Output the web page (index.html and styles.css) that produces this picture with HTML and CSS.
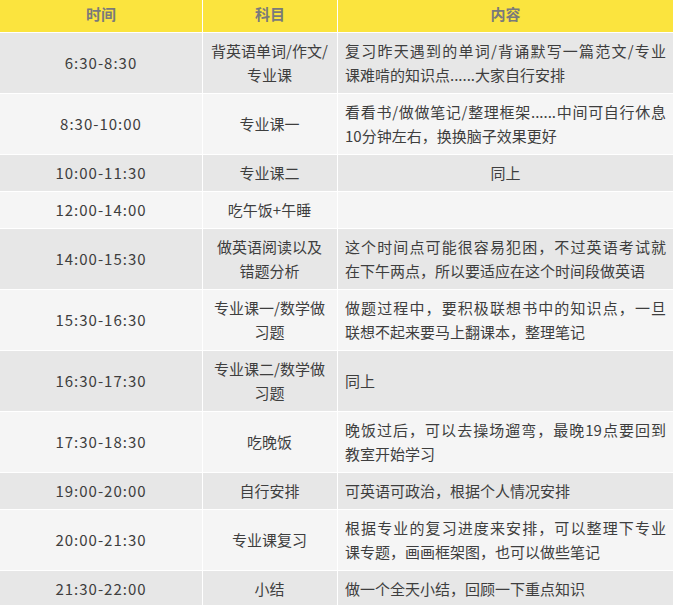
FILE: index.html
```html
<!DOCTYPE html>
<html lang="zh-CN">
<head>
<meta charset="utf-8">
<title>每日学习计划</title>
<link rel="stylesheet" href="styles.css">
</head>
<body>
<table class="plan">
  <colgroup>
    <col class="col-time">
    <col class="col-subject">
    <col class="col-content">
  </colgroup>
  <thead>
    <tr>
      <th>时间</th>
      <th>科目</th>
      <th class="last">内容</th>
    </tr>
  </thead>
  <tbody>
    <tr class="dark">
      <td class="time">6:30-8:30</td>
      <td class="subj">背英语单词/作文/专业课</td>
      <td class="cont"><span class="jl">复习昨天遇到的单词/背诵默写一篇范文/专业</span>课难啃的知识点......大家自行安排</td>
    </tr>
    <tr class="light">
      <td class="time">8:30-10:00</td>
      <td class="subj">专业课一</td>
      <td class="cont"><span class="jl">看看书/做做笔记/整理框架......中间可自行休息</span>10分钟左右，换换脑子效果更好</td>
    </tr>
    <tr class="dark">
      <td class="time">10:00-11:30</td>
      <td class="subj">专业课二</td>
      <td class="cont center">同上</td>
    </tr>
    <tr class="light">
      <td class="time">12:00-14:00</td>
      <td class="subj">吃午饭+午睡</td>
      <td class="cont"></td>
    </tr>
    <tr class="dark">
      <td class="time">14:00-15:30</td>
      <td class="subj">做英语阅读以及错题分析</td>
      <td class="cont"><span class="jl">这个时间点可能很容易犯困，不过英语考试就</span>在下午两点，所以要适应在这个时间段做英语</td>
    </tr>
    <tr class="light">
      <td class="time">15:30-16:30</td>
      <td class="subj">专业课一/数学做习题</td>
      <td class="cont"><span class="jl">做题过程中，要积极联想书中的知识点，一旦</span>联想不起来要马上翻课本，整理笔记</td>
    </tr>
    <tr class="dark">
      <td class="time">16:30-17:30</td>
      <td class="subj">专业课二/数学做习题</td>
      <td class="cont">同上</td>
    </tr>
    <tr class="light">
      <td class="time">17:30-18:30</td>
      <td class="subj">吃晚饭</td>
      <td class="cont"><span class="jl">晚饭过后，可以去操场遛弯，最晚19点要回到</span>教室开始学习</td>
    </tr>
    <tr class="dark">
      <td class="time">19:00-20:00</td>
      <td class="subj">自行安排</td>
      <td class="cont">可英语可政治，根据个人情况安排</td>
    </tr>
    <tr class="light">
      <td class="time">20:00-21:30</td>
      <td class="subj">专业课复习</td>
      <td class="cont"><span class="jl">根据专业的复习进度来安排，可以整理下专业</span>课专题，画画框架图，也可以做些笔记</td>
    </tr>
    <tr class="dark">
      <td class="time">21:30-22:00</td>
      <td class="subj">小结</td>
      <td class="cont">做一个全天小结，回顾一下重点知识</td>
    </tr>
  </tbody>
</table>
</body>
</html>
```

FILE: styles.css
```css
html, body {
  margin: 0;
  padding: 0;
  background: #ffffff;
}

body {
  font-family: "Noto Sans CJK SC", "Microsoft YaHei", sans-serif;
  font-size: 15px;
  line-height: 24px;
  color: #3e3e3e;
}

.plan {
  width: 673px;
  table-layout: fixed;
  border-collapse: separate;
  border-spacing: 0;
}

.col-time { width: 203px; }
.col-subject { width: 135px; }
.col-content { width: 335px; }

.plan th,
.plan td {
  border-right: 1px solid #ffffff;
  border-bottom: 1px solid #ffffff;
  vertical-align: middle;
}

.plan th.last,
.plan td.cont {
  border-right: none;
}

.plan th {
  background: #fbe43e;
  color: #7a7a7a;
  font-weight: bold;
  text-align: center;
  padding: 2px 8px 6px;
}

.plan td {
  padding: 6px 8px;
}

.dark td { background: #e7e7e7; }
.light td { background: #f5f5f5; }

.time {
  text-align: center;
  letter-spacing: 1px;
}

.plan td.subj {
  text-align: center;
  padding: 6px 8px 6px 7px;
}

.plan td.cont {
  text-align: left;
  padding: 6px 7px 6px 7px;
}

.plan td.cont.center {
  text-align: center;
}

.jl {
  display: block;
  text-align: justify;
  text-align-last: justify;
}
```
